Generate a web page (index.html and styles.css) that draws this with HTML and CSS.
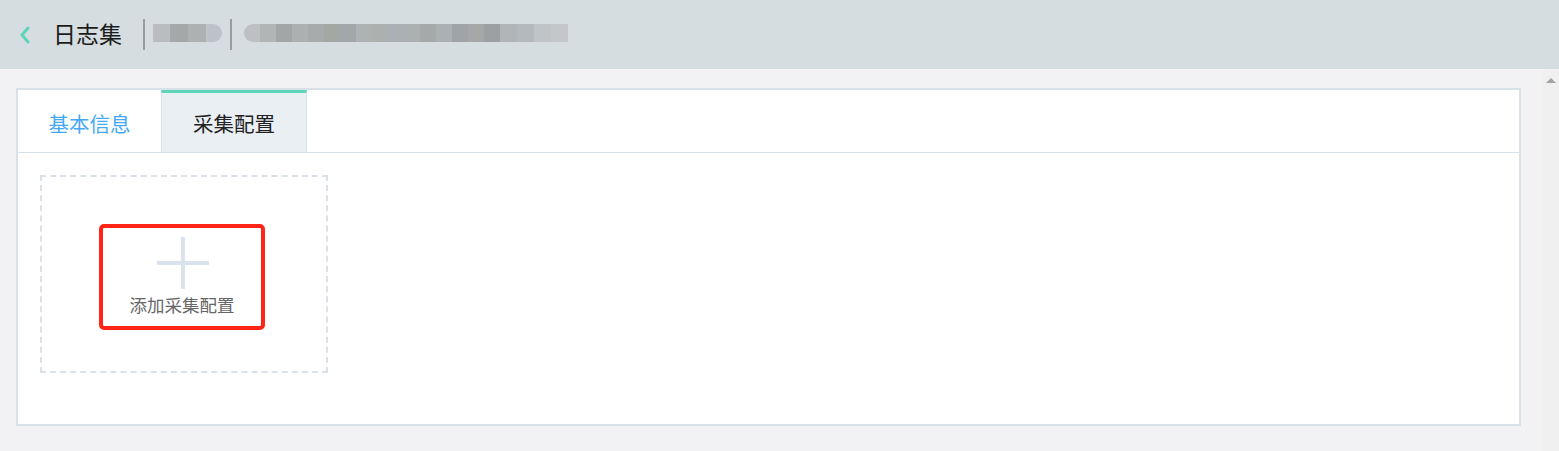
FILE: index.html
```html
<!DOCTYPE html>
<html lang="zh">
<head>
<meta charset="utf-8">
<title>日志集</title>
<link rel="stylesheet" href="styles.css">
</head>
<body>
<header class="topbar">
  <svg class="back" width="14" height="18" viewBox="0 0 14 18"><path d="M10 2 L4 9 L10 16" fill="none" stroke="#5dd5b8" stroke-width="3" stroke-linecap="round" stroke-linejoin="round"/></svg>
  <h1 class="title">日志集</h1>
  <span class="sep"></span>
  <span class="blur blur-a">
    <i style="width:17px;background:#b9bdbf"></i><i style="width:18px;background:#a4a8a9"></i><i style="width:18px;background:#adb1b2"></i><i style="width:16px;background:#bdc2c8;border-radius:0 9px 9px 0"></i>
  </span>
  <span class="sep"></span>
  <span class="blur blur-b">
    <i style="width:16px;background:#bcc0c2;border-radius:9px 0 0 9px"></i><i style="width:16px;background:#b1b5b6"></i><i style="width:16px;background:#a2a6a7"></i><i style="width:16px;background:#acb0b1"></i><i style="width:16px;background:#a7abac"></i><i style="width:16px;background:#a3a8a5"></i><i style="width:16px;background:#a2a7ac"></i><i style="width:16px;background:#aeb2b3"></i><i style="width:16px;background:#acb0ae"></i><i style="width:16px;background:#aab0b6"></i><i style="width:16px;background:#acb0b3"></i><i style="width:16px;background:#a6a9aa"></i><i style="width:16px;background:#aab0b4"></i><i style="width:16px;background:#a0a4a7"></i><i style="width:16px;background:#a5a8a6"></i><i style="width:16px;background:#9ca0a2"></i><i style="width:17px;background:#b1b5b8"></i><i style="width:17px;background:#b4b9bd"></i><i style="width:17px;background:#c1c4c6"></i><i style="width:17px;background:#c3c7c9"></i>
  </span>
</header>
<div class="body-row">
  <main class="main">
    <section class="panel">
      <nav class="tabs">
        <div class="tab">基本信息</div>
        <div class="tab active">采集配置</div>
        <div class="tab-fill"></div>
      </nav>
      <div class="content">
        <div class="add-card">
          <div class="add-inner">
            <span class="plus"></span>
            <span class="add-label">添加采集配置</span>
          </div>
        </div>
      </div>
    </section>
  </main>
  <aside class="scrollbar"><span class="arrow"></span></aside>
</div>
</body>
</html>
```
FILE: styles.css
```css
* { box-sizing: border-box; }
html, body { margin: 0; padding: 0; }
body {
  width: 1559px;
  height: 451px;
  overflow: hidden;
  background: #f2f2f4;
  font-family: "Noto Sans CJK SC", "Noto Sans", sans-serif;
  display: flex;
  flex-direction: column;
}
.topbar {
  height: 69px;
  background: #d5dde0;
  display: flex;
  align-items: center;
  padding-left: 18px;
  flex-shrink: 0;
}
.back { margin-top: 0; }
.title {
  margin: 0 0 0 21px;
  font-size: 23px;
  font-weight: 400;
  color: #1c1c1c;
  line-height: 1;
  margin-top: -2px;
}
.sep {
  width: 2px;
  height: 31px;
  background: #9a9c9d;
  margin-left: 21px;
  margin-top: -1px;
}
.blur { display: flex; height: 18px; margin-top: -3px; }
.blur i { display: block; height: 100%; }
.blur-a { margin-left: 8px; margin-right: 8px; }
.blur-b { margin-left: 12px; }
.blur-a + .sep { margin-left: 0; }

.body-row { flex: 1; display: flex; min-height: 0; }
.main { flex: 1; padding: 19px 21px 0 16px; }
.scrollbar {
  width: 17px;
  background: #f0f0f0;
  position: relative;
}
.arrow {
  position: absolute;
  left: 4px;
  top: 9px;
  width: 0; height: 0;
  border-left: 5px solid transparent;
  border-right: 5px solid transparent;
  border-bottom: 5px solid #a3a3a3;
}
.panel {
  height: 338px;
  background: #fff;
  border: 2px solid #d8e1e8;
  display: flex;
  flex-direction: column;
}
.tabs {
  display: flex;
  height: 63px;
  border-bottom: 1px solid #d8e1e8;
}
.tab {
  width: 143px;
  display: flex;
  align-items: center;
  justify-content: center;
  font-size: 20.5px;
  color: #44a9f4;
  padding-top: 4px;
}
.tab.active {
  width: 146px;
  background: #eaeff4;
  color: #222;
  border-top: 3px solid #5dd5b8;
  border-left: 1px solid #d8e1e8;
  border-right: 1px solid #d8e1e8;
  padding-top: 1px;
}
.tab-fill { flex: 1; }
.content { padding: 22px 0 0 22px; }
.add-card {
  width: 288px;
  height: 198px;
  border: 2px dashed #dae1e8;
  display: flex;
  align-items: center;
  justify-content: center;
  padding: 6px 4px 0 0;
}
.add-inner {
  width: 166px;
  height: 106px;
  border: 4px solid #ff2416;
  border-radius: 5px;
  display: flex;
  flex-direction: column;
  align-items: center;
  padding-top: 9px;
}
.plus {
  position: relative;
  width: 52px;
  height: 52px;
  display: block;
  margin-left: 2px;
}
.plus::before, .plus::after {
  content: "";
  position: absolute;
  background: #dae2eb;
}
.plus::before { left: 24px; top: 0; width: 4px; height: 52px; }
.plus::after { left: 0; top: 24px; width: 52px; height: 4px; }
.add-label {
  font-size: 17.5px;
  color: #666;
  line-height: 1;
  margin-top: 7px;
}
```
